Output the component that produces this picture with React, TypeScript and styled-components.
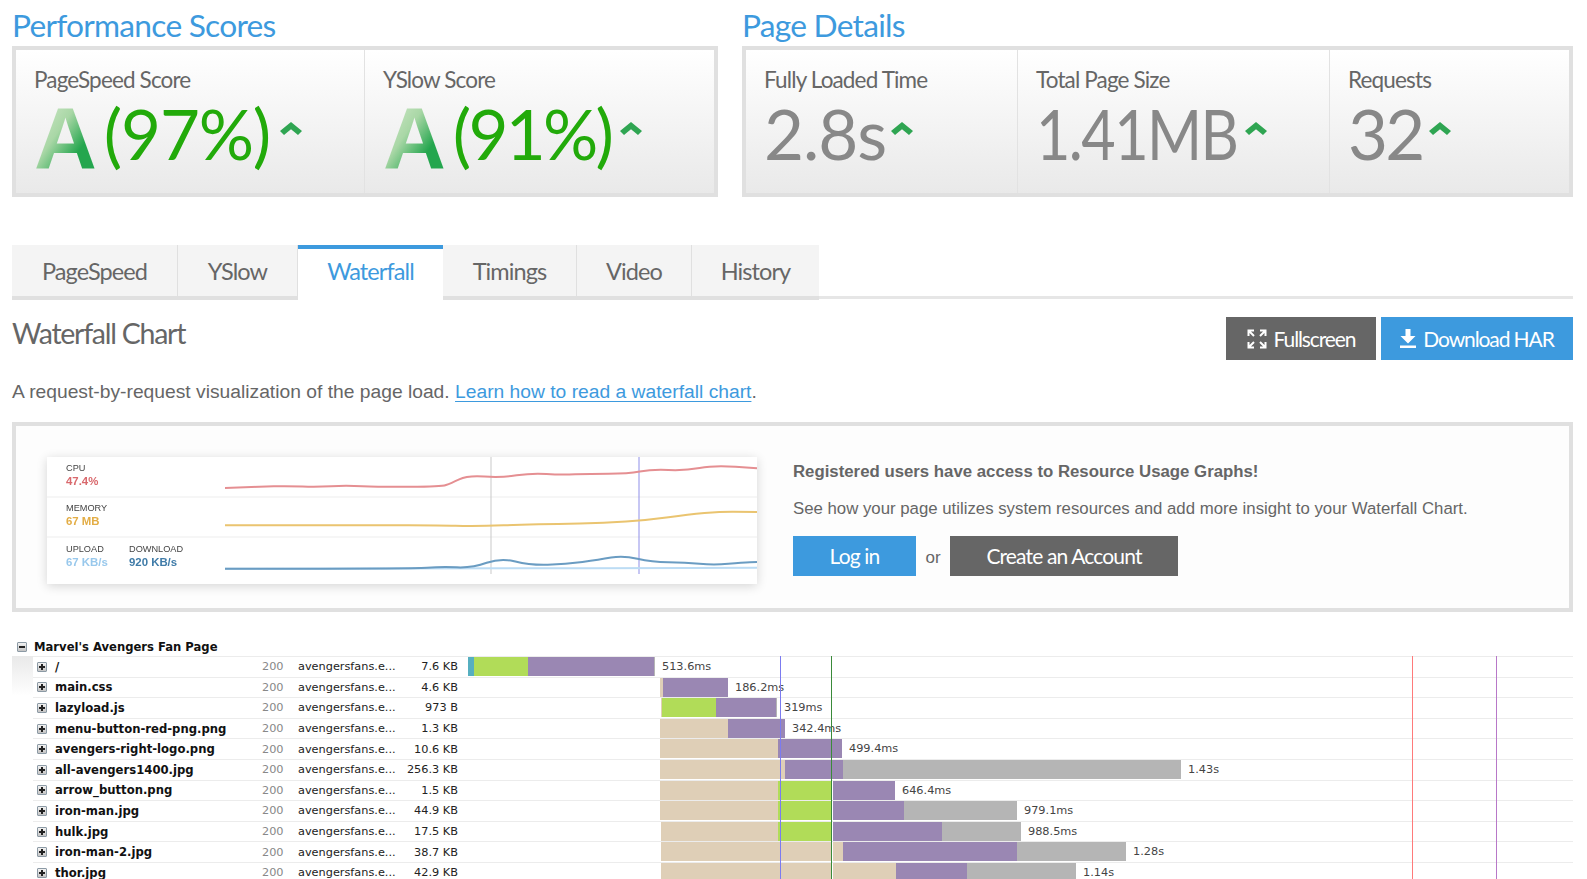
import React, {FC} from "react";
import styled, {createGlobalStyle} from "styled-components";

const TITLE_FONT = `Lato, "Noto Sans", sans-serif`;
const BLUE = "#3d9ade";
const DARK = "#666666";

const GlobalStyle = createGlobalStyle`
  html, body {
    margin: 0;
    height: 879px;
    overflow: hidden;
    background: #fff;
  }
  * { box-sizing: border-box; }
`;

const Page = styled.div`
  padding: 0 14px 0 12px;
  height: 879px;
  overflow: hidden;
  color: ${DARK};
  font-family: "Liberation Sans", Arial, sans-serif;
`;

const TopRow = styled.div`
  display: flex;
  gap: 24px;
`;

const Group = styled.section<{ $width?: number }>`
  flex: ${p => (p.$width ? `0 0 ${p.$width}px` : "1")};
`;

const GroupTitle = styled.h2`
  margin: 0;
  height: 46px;
  font: 400 31.7px/50px ${TITLE_FONT};
  letter-spacing: -0.75px;
  color: ${BLUE};
  white-space: nowrap;
`;

const Panel = styled.div`
  display: flex;
  height: 151px;
  border: 4px solid #e0e0e0;
  background: linear-gradient(#ffffff, #e9e9e9);
`;

const Cell = styled.div<{ $width?: number }>`
  flex: ${p => (p.$width ? `0 0 ${p.$width}px` : "1")};
  padding: 15px 0 0 18px;
  border-left: 1px solid #e2e2e2;
  &:first-child { border-left: 0; }
`;

const CellLabel = styled.div`
  font: 400 22.5px/30px ${TITLE_FONT};
  letter-spacing: -0.85px;
  color: ${DARK};
  white-space: nowrap;
`;

const Figure = styled.div`
  display: flex;
  align-items: flex-start;
  height: 70px;
  margin-top: 1px;
`;

const Grade = styled.span`
  margin: 4px 8px 0 0;
  font: 700 87px/76px "Liberation Sans", sans-serif;
  letter-spacing: -1px;
  background: linear-gradient(125deg, #cfe8c8 8%, #a9d7a6 40%, #24a64e 70%);
  -webkit-background-clip: text;
  background-clip: text;
  color: transparent;
`;

const ScoreValue = styled.span<{ $grey?: boolean; $spacing?: number; $squeeze?: boolean }>`
  font: 400 69px/76px ${TITLE_FONT};
  letter-spacing: ${p => p.$spacing ?? -1.8}px;
  color: ${p => (p.$grey ? "#888888" : "#22aa0a")};
  white-space: nowrap;
  transform-origin: left center;
  ${p => p.$squeeze && "transform: scaleX(0.86); margin-right: -32px;"}
`;

const Chevron = styled.svg<{ $gap: number }>`
  flex: none;
  width: 22px;
  height: 13px;
  margin: 26px 0 0 ${p => p.$gap}px;
  fill: #2fa552;
`;

const Up: FC<{ gap?: number }> = ({gap = 9}) => (
  <Chevron $gap={gap} viewBox="0 0 22 13">
    <path d="M11 0l11 9-4 4-7-5.800L4 13 0 9z" />
  </Chevron>
);

const TabBar = styled.nav`
  display: flex;
  height: 55px;
  margin-top: 48px;
  position: relative;
  &::after {
    content: "";
    position: absolute;
    left: 0;
    right: 0;
    top: 51px;
    height: 3px;
    background: #e6e6e6;
  }
`;

const Tab = styled.a<{ $active?: boolean; $width: number }>`
  position: relative;
  z-index: 1;
  width: ${p => p.$width}px;
  text-align: center;
  font: 400 23.5px/53px ${TITLE_FONT};
  letter-spacing: -0.9px;
  color: ${p => (p.$active ? BLUE : DARK)};
  background: ${p => (p.$active ? "#fff" : "#f4f4f4")};
  border-right: ${p => (p.$active ? "0" : "1px solid #e0e0e0")};
  border-bottom: 4px solid ${p => (p.$active ? "#fff" : "#e0e0e0")};
  border-top: ${p => (p.$active ? `4px solid ${BLUE}` : "0")};
  line-height: ${p => (p.$active ? "45px" : "53px")};
  &:last-child { border-right: 0; }
`;

const HeadRow = styled.div`
  display: flex;
  align-items: flex-start;
  justify-content: space-between;
  margin-top: 17px;
  height: 43px;
`;

const Heading = styled.h3`
  margin: 0;
  font: 400 28.5px/32px ${TITLE_FONT};
  letter-spacing: -1.25px;
  color: ${DARK};
`;

const Actions = styled.div`
  display: flex;
  gap: 5px;
`;

const Action = styled.a<{ $blue?: boolean; $width: number }>`
  display: flex;
  align-items: center;
  justify-content: center;
  gap: 7px;
  width: ${p => p.$width}px;
  height: 43px;
  color: #fff;
  background: ${p => (p.$blue ? BLUE : DARK)};
  font: 400 21px/43px ${TITLE_FONT};
  letter-spacing: -1.1px;
`;

const Intro = styled.p`
  margin: 19px 0 0;
  font-size: 19.25px;
  line-height: 26px;
  color: ${DARK};
`;

const TextLink = styled.a`
  color: ${BLUE};
  text-decoration: underline;
  text-underline-offset: 3px;
`;

const Promo = styled.div`
  display: flex;
  gap: 36px;
  height: 190px;
  margin-top: 17px;
  padding: 31px 31px 0;
  border: 4px solid #e0e0e0;
  background: #fdfdfd;
`;

const ChartCard = styled.div`
  flex: 0 0 710px;
  height: 127px;
  background: #fff;
  box-shadow: 0 2px 10px rgba(0, 0, 0, 0.16);
`;

const ChartSvg = styled.svg`
  display: block;
  width: 710px;
  height: 127px;
`;

const ChartText = styled.text<{ $size?: number; $bold?: boolean }>`
  font-family: "Liberation Sans", sans-serif;
  font-size: ${p => p.$size ?? 9.2}px;
  font-weight: ${p => (p.$bold ? 700 : 400)};
`;

const PromoBody = styled.div`
  padding-top: 4px;
`;

const PromoTitle = styled.div`
  font-size: 16.8px;
  font-weight: 700;
  line-height: 22px;
  color: ${DARK};
`;

const PromoText = styled.div`
  margin-top: 15px;
  font-size: 16.8px;
  line-height: 22px;
  color: ${DARK};
`;

const PromoActions = styled.div`
  display: flex;
  align-items: center;
  margin-top: 16px;
  font-size: 17px;
`;

const PromoButton = styled.a<{ $blue?: boolean; $width: number }>`
  width: ${p => p.$width}px;
  height: 40px;
  text-align: center;
  color: #fff;
  background: ${p => (p.$blue ? BLUE : DARK)};
  font: 400 21px/39px ${TITLE_FONT};
  letter-spacing: -0.85px;
`;

const Or = styled.span`
  width: 34px;
  padding-top: 3px;
  text-align: center;
`;

const Table = styled.div`
  position: relative;
  margin-top: 25px;
  background: linear-gradient(#e9e9e9, #fff) 0 19px / 21px 40px no-repeat;
  font-family: "DejaVu Sans", Verdana, sans-serif;
  font-size: 11.3px;
`;

const TableTitle = styled.div`
  display: flex;
  align-items: center;
  gap: 7px;
  height: 19px;
  padding-left: 5px;
  font-weight: 700;
  font-size: 11.6px;
  color: #111;
`;

const Toggle = styled.i<{ $open?: boolean }>`
  position: relative;
  flex: none;
  display: block;
  width: 10px;
  height: 10px;
  border: 1px solid #8c9aa5;
  border-radius: 1px;
  background: linear-gradient(#f2f2f2, #c4c4c4);
  &::before {
    content: "";
    position: absolute;
    left: 1px;
    top: 3px;
    width: 6px;
    height: 2px;
    background: #222;
  }
  &::after {
    content: "";
    display: ${p => (p.$open ? "none" : "block")};
    position: absolute;
    left: 3px;
    top: 1px;
    width: 2px;
    height: 6px;
    background: #222;
  }
`;

const Row = styled.div`
  display: grid;
  grid-template-columns: 22px 207px 20px 123px 53px 1fr;
  align-items: center;
  height: 20.6px;
  margin-left: 21px;
  border-top: 1px solid #ececec;
  color: #222;
  white-space: nowrap;
`;

const ToggleCell = styled.div`
  padding-left: 4px;
`;

const Name = styled.div`
  font-weight: 700;
  font-size: 11.65px;
  color: #111;
`;

const Status = styled.div`
  text-align: right;
  color: #888;
`;

const Domain = styled.div`
  padding-left: 16px;
`;

const Size = styled.div`
  text-align: right;
`;

const Track = styled.div`
  display: flex;
  align-items: center;
  align-self: start;
  height: 19px;
`;

const SEGMENT_COLORS = {
  teal: "#56afc0",
  tan: "#dfcfb7",
  green: "#b1dc58",
  purple: "#9a87b3",
  grey: "#b5b5b5",
  gap: "transparent",
};

const Segment = styled.div<{ $kind: keyof typeof SEGMENT_COLORS }>`
  flex: none;
  height: 19px;
  background: ${p => SEGMENT_COLORS[p.$kind]};
`;

const Timing = styled.span`
  margin-left: 7px;
  color: #444;
`;

const Marker = styled.div<{ $color: string }>`
  position: absolute;
  top: 19px;
  bottom: -40px;
  width: 1px;
  background: ${p => p.$color};
`;

type Kind = keyof typeof SEGMENT_COLORS;
type Request = {
  name: string;
  size: string;
  time: string;
  start: number;
  parts: [Kind, number][];
};

// parts are [kind, right edge in page px]
const REQUESTS: Request[] = [
  {name: "/", size: "7.6 KB", time: "513.6ms", start: 468, parts: [["teal", 474], ["green", 528], ["purple", 654], ["grey", 655]]},
  {name: "main.css", size: "4.6 KB", time: "186.2ms", start: 660, parts: [["tan", 663], ["purple", 728]]},
  {name: "lazyload.js", size: "973 B", time: "319ms", start: 661, parts: [["tan", 662], ["green", 716], ["purple", 776], ["grey", 777]]},
  {name: "menu-button-red-png.png", size: "1.3 KB", time: "342.4ms", start: 660, parts: [["tan", 728], ["purple", 785]]},
  {name: "avengers-right-logo.png", size: "10.6 KB", time: "499.4ms", start: 660, parts: [["tan", 778], ["purple", 842]]},
  {name: "all-avengers1400.jpg", size: "256.3 KB", time: "1.43s", start: 660, parts: [["tan", 785], ["purple", 843], ["grey", 1181]]},
  {name: "arrow_button.png", size: "1.5 KB", time: "646.4ms", start: 660, parts: [["tan", 778], ["green", 831], ["gap", 833], ["purple", 895]]},
  {name: "iron-man.jpg", size: "44.9 KB", time: "979.1ms", start: 660, parts: [["tan", 778], ["green", 831], ["gap", 833], ["purple", 904], ["grey", 1017]]},
  {name: "hulk.jpg", size: "17.5 KB", time: "988.5ms", start: 661, parts: [["tan", 778], ["green", 831], ["gap", 833], ["purple", 942], ["grey", 1021]]},
  {name: "iron-man-2.jpg", size: "38.7 KB", time: "1.28s", start: 661, parts: [["tan", 831], ["gap", 833], ["tan", 843], ["purple", 1017], ["grey", 1126]]},
  {name: "thor.jpg", size: "42.9 KB", time: "1.14s", start: 661, parts: [["tan", 831], ["gap", 833], ["tan", 896], ["purple", 967], ["grey", 1076]]},
];

const TRACK_LEFT = 458;

// smooth line through the points, measured off the reference crop
const curve = (raw: number[][]) => {
  const pts = raw.map(([x, y]) => [(x - 36) / 2.09, (y - 36) / 3]);
  let d = `M${pts[0][0].toFixed(1)} ${pts[0][1].toFixed(1)}`;
  for (let i = 1; i < pts.length - 1; i++) {
    const mx = (pts[i][0] + pts[i + 1][0]) / 2;
    const my = (pts[i][1] + pts[i + 1][1]) / 2;
    d += `Q${pts[i][0].toFixed(1)} ${pts[i][1].toFixed(1)} ${mx.toFixed(1)} ${my.toFixed(1)}`;
  }
  const last = pts[pts.length - 1];
  return `${d}L${last[0].toFixed(1)} ${last[1].toFixed(1)}`;
};

const CPU = [[408,129],[480,125],[540,123],[600,126],[660,121],[730,126],[860,125],[880,115],[915,91],[985,98],[1050,84],[1110,90],[1170,86],[1250,86],[1300,73],[1370,77],[1430,61],[1520,70]];
const MEMORY = [[408,241],[650,241],[850,240],[930,244],[1050,238],[1250,233],[1420,200],[1520,201]];
const DOWNLOAD = [[408,371],[800,371],[860,365],[925,369],[985,338],[1045,361],[1120,358],[1190,344],[1240,331],[1300,351],[1370,352],[1430,361],[1490,352],[1520,351]];
const UPLOAD = [[408,371],[960,369],[1240,370],[1520,368]];

const UsageChart: FC = () => (
  <ChartCard>
    <ChartSvg viewBox="0 0 710 127">
      <defs>
        <filter id="soft"><feGaussianBlur stdDeviation="0.4" /></filter>
      </defs>
      <g filter="url(#soft)" fill="none" strokeLinejoin="round">
        <rect x="0" y="39" width="710" height="2" fill="#f6f6f6" />
        <rect x="0" y="79" width="710" height="2" fill="#f6f6f6" />
        <line x1="444" y1="0" x2="444" y2="117" stroke="#c9c9c9" />
        <line x1="592" y1="0" x2="592" y2="117" stroke="#8f8fe8" />
        <path d={curve(CPU)} stroke="#e58f92" strokeWidth="2" />
        <path d={curve(MEMORY)} stroke="#eac46f" strokeWidth="2" />
        <path d={curve(UPLOAD)} stroke="#bcdcf4" strokeWidth="2" />
        <path d={curve(DOWNLOAD)} stroke="#6a9cc2" strokeWidth="2" />
      </g>
      <g filter="url(#soft)">
        <ChartText x="19" y="14" fill="#444">CPU</ChartText>
        <ChartText x="19" y="28" $size={11.4} $bold fill="#d9696d">47.4%</ChartText>
        <ChartText x="19" y="54" fill="#444">MEMORY</ChartText>
        <ChartText x="19" y="68" $size={11.4} $bold fill="#e3ad45">67 MB</ChartText>
        <ChartText x="19" y="95" fill="#444">UPLOAD</ChartText>
        <ChartText x="19" y="109" $size={11.4} $bold fill="#98c8ec">67 KB/s</ChartText>
        <ChartText x="82" y="95" fill="#444">DOWNLOAD</ChartText>
        <ChartText x="82" y="109" $size={11.4} $bold fill="#3f7ba8">920 KB/s</ChartText>
      </g>
    </ChartSvg>
  </ChartCard>
);

const App: FC = () => (
  <Page>
    <GlobalStyle />
    <TopRow>
      <Group $width={706}>
        <GroupTitle>Performance Scores</GroupTitle>
        <Panel>
          <Cell $width={348}>
            <CellLabel>PageSpeed Score</CellLabel>
            <Figure><Grade>A</Grade><ScoreValue $spacing={-1.2}>(97%)</ScoreValue><Up gap={10} /></Figure>
          </Cell>
          <Cell>
            <CellLabel>YSlow Score</CellLabel>
            <Figure><Grade>A</Grade><ScoreValue $spacing={-2.8}>(91%)</ScoreValue><Up /></Figure>
          </Cell>
        </Panel>
      </Group>
      <Group>
        <GroupTitle>Page Details</GroupTitle>
        <Panel>
          <Cell $width={271}>
            <CellLabel>Fully Loaded Time</CellLabel>
            <Figure><ScoreValue $grey $spacing={-1}>2.8s</ScoreValue><Up gap={5} /></Figure>
          </Cell>
          <Cell $width={312}>
            <CellLabel>Total Page Size</CellLabel>
            <Figure><ScoreValue $grey $squeeze>1.41MB</ScoreValue><Up gap={7} /></Figure>
          </Cell>
          <Cell>
            <CellLabel>Requests</CellLabel>
            <Figure><ScoreValue $grey $spacing={-2.8}>32</ScoreValue><Up gap={7} /></Figure>
          </Cell>
        </Panel>
      </Group>
    </TopRow>

    <TabBar>
      <Tab $width={166}>PageSpeed</Tab>
      <Tab $width={120}>YSlow</Tab>
      <Tab $active $width={145}>Waterfall</Tab>
      <Tab $width={134}>Timings</Tab>
      <Tab $width={115}>Video</Tab>
      <Tab $width={127}>History</Tab>
    </TabBar>

    <HeadRow>
      <Heading>Waterfall Chart</Heading>
      <Actions>
        <Action $width={150}>
          <svg width="20" height="20" viewBox="0 0 20 20" fill="none" stroke="#fff" strokeWidth="2">
            <path d="M1.500 7V1.500H7M1.500 1.500l5.500 5.500M13 1.500h5.500V7M18.500 1.500L13 7M1.500 13v5.500H7M1.500 18.500L7 13M18.500 13v5.500H13M18.500 18.500L13 13" />
          </svg>
          Fullscreen
        </Action>
        <Action $blue $width={192}>
          <svg width="16" height="20" viewBox="0 0 16 20" fill="#fff">
            <path d="M5.500 0h5v7H15.500L8 14.500.5 7h5zM0 16.500h16V19H0z" />
          </svg>
          Download HAR
        </Action>
      </Actions>
    </HeadRow>

    <Intro>
      A request-by-request visualization of the page load. <TextLink>Learn how to read a waterfall chart</TextLink>.
    </Intro>

    <Promo>
      <UsageChart />
      <PromoBody>
        <PromoTitle>Registered users have access to Resource Usage Graphs!</PromoTitle>
        <PromoText>See how your page utilizes system resources and add more insight to your Waterfall Chart.</PromoText>
        <PromoActions>
          <PromoButton $blue $width={123}>Log in</PromoButton>
          <Or>or</Or>
          <PromoButton $width={228}>Create an Account</PromoButton>
        </PromoActions>
      </PromoBody>
    </Promo>

    <Table>
      <TableTitle><Toggle $open />Marvel's Avengers Fan Page</TableTitle>
      {REQUESTS.map(r => {
        let edge = r.start;
        return (
          <Row key={r.name}>
            <ToggleCell><Toggle /></ToggleCell>
            <Name>{r.name}</Name>
            <Status>200</Status>
            <Domain>avengersfans.e...</Domain>
            <Size>{r.size}</Size>
            <Track style={{paddingLeft: r.start - TRACK_LEFT}}>
              {r.parts.map(([kind, right], i) => {
                const width = right - edge;
                edge = right;
                return <Segment key={i} $kind={kind} style={{width}} />;
              })}
              <Timing>{r.time}</Timing>
            </Track>
          </Row>
        );
      })}
      <Marker $color="#7b7bf0" style={{left: 768}} />
      <Marker $color="#3a8a3a" style={{left: 819}} />
      <Marker $color="#ff7a7a" style={{left: 1400}} />
      <Marker $color="#b878c8" style={{left: 1484}} />
    </Table>
  </Page>
);

export default App;
